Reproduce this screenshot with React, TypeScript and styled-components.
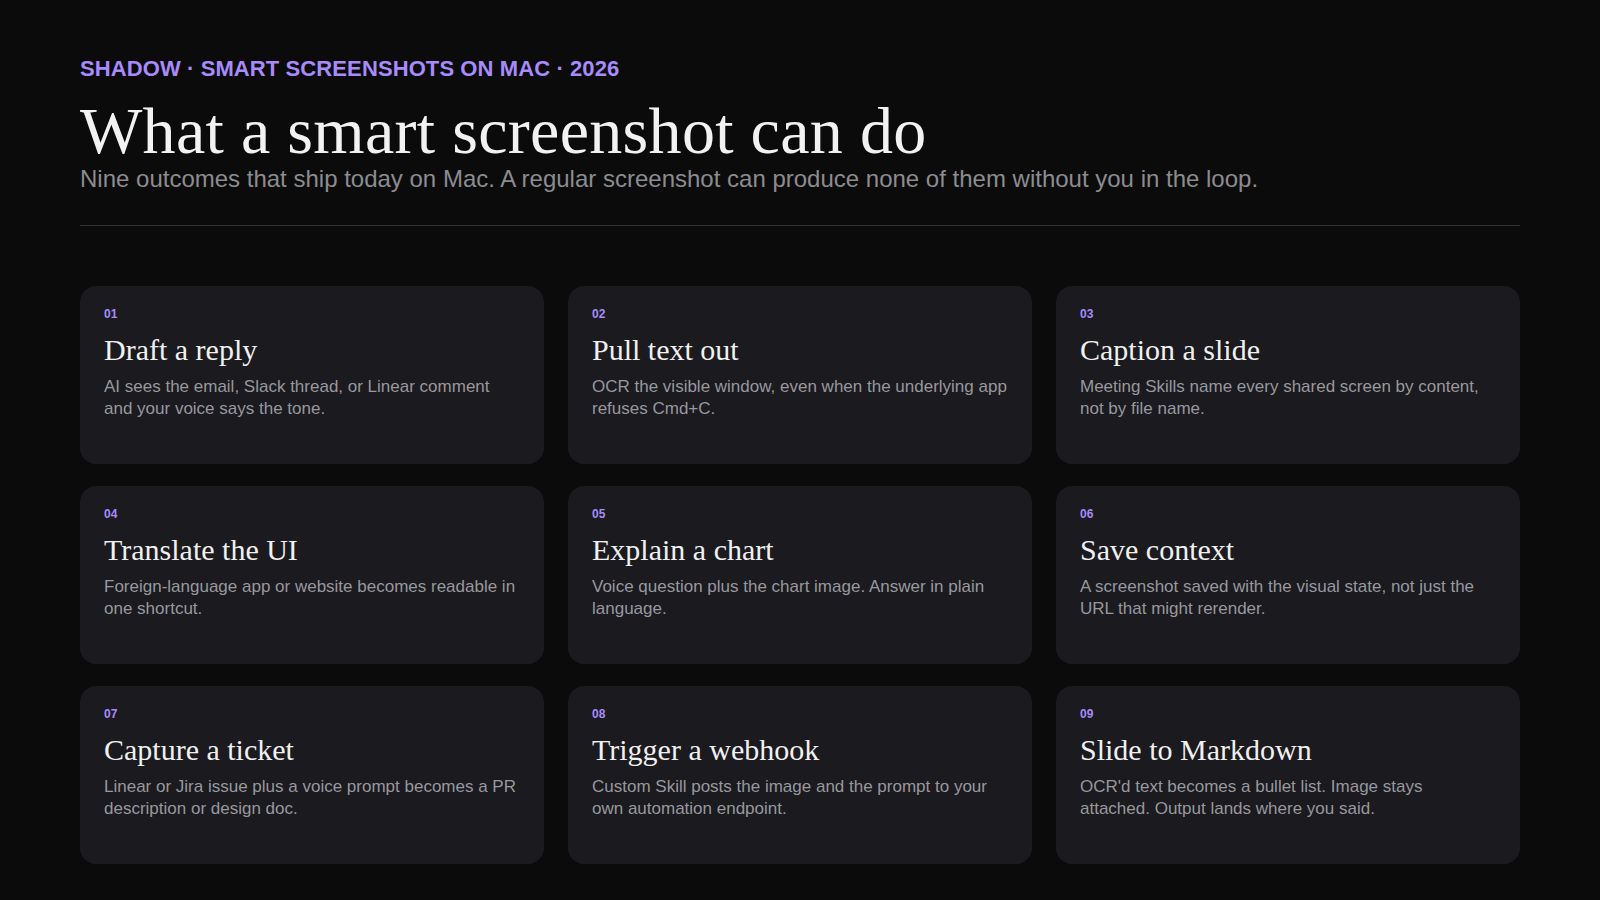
import React from "react";
import styled, { createGlobalStyle } from "styled-components";

const Global = createGlobalStyle`
  html, body { margin: 0; padding: 0; background: #0b0b0c; }
  body { font-family: "Liberation Sans", Arial, sans-serif; }
`;

const Page = styled.div`
  width: 1600px; height: 900px; box-sizing: border-box;
  padding: 56px 80px 0; background: #0b0b0c;
  display: flex; flex-direction: column;
`;
const Eyebrow = styled.div`
  font-size: 22px; font-weight: 700; color: #a78bfa; letter-spacing: 0.1px; line-height: 26px;
`;
const Title = styled.h1`
  margin: 16px 0 0; font-family: "Liberation Serif", "DejaVu Serif", serif; font-weight: 400;
  font-size: 66px; line-height: 66px; color: #f2f2f2; letter-spacing: 0.3px;
`;
const Sub = styled.p`
  margin: 0; font-size: 24px; line-height: 30px; color: #8c8c90;
`;
const Divider = styled.hr`
  margin: 31px 0 0; border: 0; border-top: 1px solid #333336; width: 100%;
`;
const Grid = styled.div`
  margin-top: 60px; display: grid; grid-template-columns: repeat(3, 1fr);
  grid-auto-rows: 178px; gap: 22px 24px;
`;
const Card = styled.div`
  background: #1a1a1f; border-radius: 16px; padding: 20px 24px; box-sizing: border-box;
`;
const Num = styled.div`
  font-size: 12px; font-weight: 700; color: #a78bfa; line-height: 16px;
`;
const CardTitle = styled.div`
  margin-top: 10px; font-family: "Liberation Serif", "DejaVu Serif", serif;
  font-size: 30px; line-height: 36px; color: #f0f0f0;
`;
const Desc = styled.div`
  margin-top: 8px; font-size: 17px; line-height: 22px; color: #98989d;
`;

const items = [
  ["Draft a reply", "AI sees the email, Slack thread, or Linear comment and your voice says the tone."],
  ["Pull text out", "OCR the visible window, even when the underlying app refuses Cmd+C."],
  ["Caption a slide", "Meeting Skills name every shared screen by content, not by file name."],
  ["Translate the UI", "Foreign-language app or website becomes readable in one shortcut."],
  ["Explain a chart", "Voice question plus the chart image. Answer in plain language."],
  ["Save context", "A screenshot saved with the visual state, not just the URL that might rerender."],
  ["Capture a ticket", "Linear or Jira issue plus a voice prompt becomes a PR description or design doc."],
  ["Trigger a webhook", "Custom Skill posts the image and the prompt to your own automation endpoint."],
  ["Slide to Markdown", "OCR'd text becomes a bullet list. Image stays attached. Output lands where you said."],
];

export default function App() {
  return (
    <Page>
      <Global />
      <Eyebrow>SHADOW · SMART SCREENSHOTS ON MAC · 2026</Eyebrow>
      <Title>What a smart screenshot can do</Title>
      <Sub>Nine outcomes that ship today on Mac. A regular screenshot can produce none of them without you in the loop.</Sub>
      <Divider />
      <Grid>
        {items.map(([t, d], i) => (
          <Card key={i}>
            <Num>{String(i + 1).padStart(2, "0")}</Num>
            <CardTitle>{t}</CardTitle>
            <Desc>{d}</Desc>
          </Card>
        ))}
      </Grid>
    </Page>
  );
}
